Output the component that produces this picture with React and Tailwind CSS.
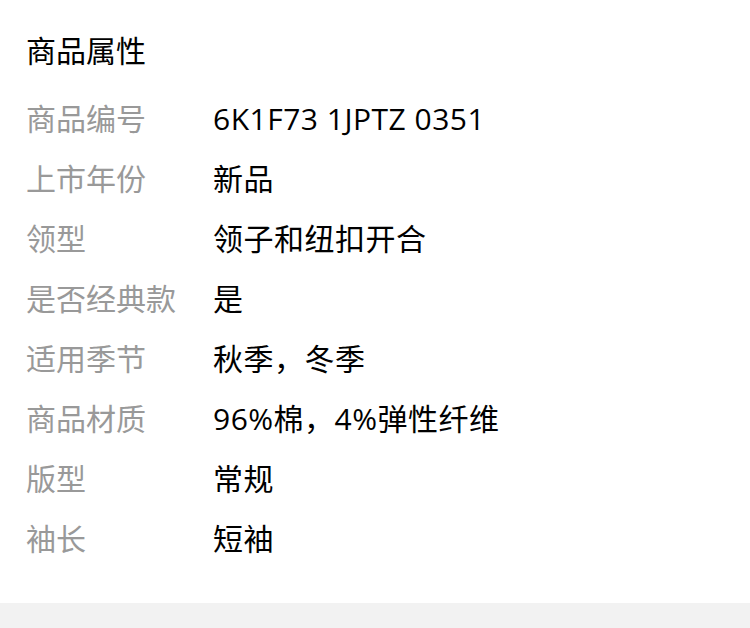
import React from 'react';

const attrs = [
  { label: '商品编号', value: '6K1F73 1JPTZ 0351' },
  { label: '上市年份', value: '新品' },
  { label: '领型', value: '领子和纽扣开合' },
  { label: '是否经典款', value: '是' },
  { label: '适用季节', value: '秋季，冬季' },
  { label: '商品材质', value: '96%棉，4%弹性纤维' },
  { label: '版型', value: '常规' },
  { label: '袖长', value: '短袖' },
];

const App = () => {
  return (
    <div
      className="w-[750px] h-[628px] flex flex-col bg-white"
      style={{ fontFamily: '"Open Sans", "Noto Sans CJK SC", sans-serif' }}
    >
      <div className="px-[26px] pt-[20px] pb-[35px]">
        <div className="h-[60px] mb-[8px] flex items-center text-[30px] text-black">商品属性</div>
        {attrs.map((a) => (
          <div key={a.label} className="h-[60px] flex items-center text-[30px]">
            <span className="w-[187px] shrink-0 text-[#999999]">{a.label}</span>
            <span className="text-black tracking-[0.5px]">{a.value}</span>
          </div>
        ))}
      </div>
      <div className="flex-1 bg-[#f2f2f2]" />
    </div>
  );
};

export default App;
